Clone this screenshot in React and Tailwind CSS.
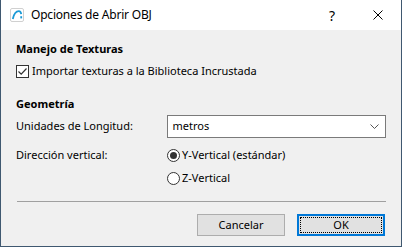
import React from 'react';

const font = { fontFamily: '"Noto Sans", "Open Sans", sans-serif' };

const App = () => {
  return (
    <div
      className="w-[402px] h-[247px] bg-[#f0f0f0] border-x border-b border-[#3f5870] flex flex-col text-[11px] text-black"
      style={font}
    >
      {/* title bar */}
      <div className="h-[30px] bg-white flex items-center shrink-0">
        <div className="w-[30px] flex justify-center pl-[2px]">
          <svg width="14" height="14" viewBox="0 0 14 14">
            <rect x="0.5" y="0.5" width="13" height="13" rx="1.5" fill="#fff" stroke="#d0d0d0" />
            <path d="M2.8 11 C3.8 6.5 6 3.2 8.8 3.2 C10.3 3.2 11 4.5 11.2 6.2" fill="none" stroke="#1a9ad6" strokeWidth="1.8" />
            <rect x="10.3" y="8.2" width="1.8" height="2.2" fill="#1a9ad6" />
          </svg>
        </div>
        <span className="leading-none text-[12px] tracking-[-0.2px]">Opciones de Abrir OBJ</span>
        <div className="ml-auto flex h-full">
          <div className="w-[46px] flex items-center justify-center text-[14px]">?</div>
          <div className="w-[46px] flex items-center justify-center">
            <svg width="10" height="10" viewBox="0 0 10 10">
              <path d="M0.5 0.5 L9.5 9.5 M9.5 0.5 L0.5 9.5" stroke="#000" strokeWidth="1" />
            </svg>
          </div>
        </div>
      </div>

      <div className="px-[15px] pt-[11px] flex flex-col">
        <div className="h-[16px] flex items-center font-bold">Manejo de Texturas</div>
        <div className="h-[16px] mt-[6px] flex items-center">
          <div className="w-[13px] h-[13px] border border-[#333] bg-white flex items-center justify-center">
            <svg width="11" height="11" viewBox="0 0 11 11">
              <path d="M1.5 5.5 L4.2 8.2 L9.5 2.5" fill="none" stroke="#333" strokeWidth="1.2" />
            </svg>
          </div>
          <span className="ml-[3px]">Importar texturas a la Biblioteca Incrustada</span>
        </div>

        <div className="h-[16px] mt-[17px] flex items-center font-bold">Geometría</div>
        <div className="h-[23px] mt-[3px] flex items-center">
          <span className="w-[151px]">Unidades de Longitud:</span>
          <div className="w-[220px] h-[23px] border border-[#7a7a7a] bg-white flex items-center px-[5px]">
            <span>metros</span>
            <svg className="ml-auto mr-[1px]" width="9" height="6" viewBox="0 0 9 6">
              <path d="M0.5 0.5 L4.5 4.5 L8.5 0.5" fill="none" stroke="#555" strokeWidth="1" />
            </svg>
          </div>
        </div>

        <div className="h-[16px] mt-[9px] flex items-center">
          <span className="w-[151px]">Dirección vertical:</span>
          <div className="w-[13px] h-[13px] rounded-full border border-[#333] bg-white flex items-center justify-center">
            <div className="w-[7px] h-[7px] rounded-full bg-[#333]" />
          </div>
          <span className="ml-[2px]">Y-Vertical (estándar)</span>
        </div>
        <div className="h-[16px] mt-[7px] flex items-center">
          <span className="w-[151px]" />
          <div className="w-[13px] h-[13px] rounded-full border border-[#333] bg-white" />
          <span className="ml-[2px]">Z-Vertical</span>
        </div>

        <div className="h-px w-[369px] bg-[#a0a0a0] mt-[15px] ml-[1px]" />

        <div className="flex justify-end gap-[12px] mt-[12px] pr-[1px]">
          <button className="w-[88px] h-[22px] bg-[#e1e1e1] border border-[#adadad] flex items-center justify-center">
            Cancelar
          </button>
          <button className="w-[88px] h-[22px] bg-[#e1e1e1] border-2 border-[#0078d7] p-px">
            <div className="w-full h-full border border-dotted border-black flex items-center justify-center">
              OK
            </div>
          </button>
        </div>
      </div>
    </div>
  );
};

export default App;
